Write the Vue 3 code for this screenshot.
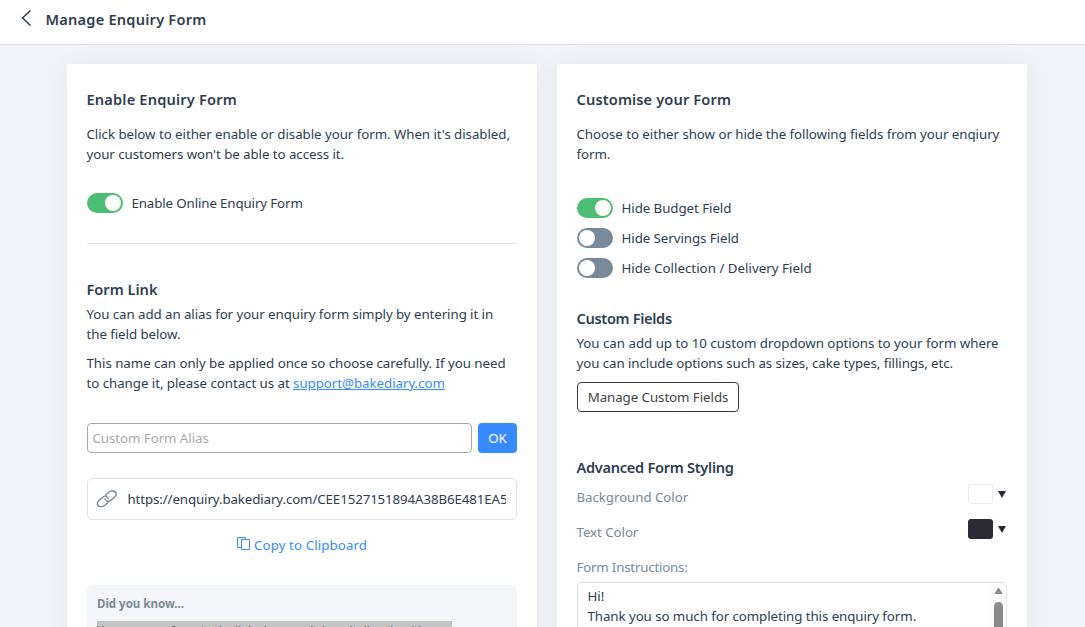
<script setup>
import { ref } from 'vue'

const enabled = ref(true)
const alias = ref('')
const fields = ref([
  { label: 'Hide Budget Field', on: true, cls: 'f1' },
  { label: 'Hide Servings Field', on: false, cls: 'f2' },
  { label: 'Hide Collection / Delivery Field', on: false, cls: 'f3' },
])
const colors = [
  { label: 'Background Color', cls: 'light' },
  { label: 'Text Color', cls: 'dark' },
]
</script>

<template>
  <div class="page">
    <header class="topbar">
      <svg class="back" width="12" height="18" viewBox="0 0 12 18"><path d="M10.5 1.5 L2.5 9 L10.5 16.5" /></svg>
      <h1 class="t-manage">Manage Enquiry Form</h1>
    </header>

    <main class="columns">
      <section class="card">
        <h2><span class="t-enable">Enable Enquiry Form</span></h2>
        <p class="intro">
          <span class="line a1">Click below to either enable or disable your form. When it's disabled,</span>
          <span class="line a2">your customers won't be able to access it.</span>
        </p>
        <div class="toggle-row single">
          <button class="switch" :class="{ on: enabled }" @click="enabled = !enabled"><i></i></button>
          <span class="a3">Enable Online Enquiry Form</span>
        </div>
        <hr />
        <h2 class="link-title"><span class="t-link">Form Link</span></h2>
        <p>
          <span class="line a4">You can add an alias for your enquiry form simply by entering it in</span>
          <span class="line a5">the field below.</span>
        </p>
        <p class="second">
          <span class="line a6">This name can only be applied once so choose carefully. If you need</span>
          <span class="line a7">to change it, please contact us at <a class="mail">support@bakediary.com</a></span>
        </p>
        <div class="alias-row">
          <input v-model="alias" placeholder="Custom Form Alias" />
          <button class="ok">OK</button>
        </div>
        <div class="url-box">
          <svg class="chain" width="22" height="18" viewBox="0 0 22 18">
            <path d="M9.2 5.4 L12.4 2.5 Q14 1 16 1 L17.2 1 Q20 1.3 20.2 4 Q20.2 5.4 19 6.6 L14.5 10.6 Q12.8 12 10.9 11.2 Q9 10.2 8.9 8.2" />
            <path d="M12.2 12.3 L8.8 15.3 Q7.4 16.6 5.3 16.6 L4.2 16.6 Q1.4 16.3 1.3 13.6 Q1.3 12.2 2.5 11.1 L7 7 Q8.7 5.6 10.6 6.5 Q12.3 7.4 12.5 9.3" />
          </svg>
          <div class="url"><span class="t-url">https://enquiry.bakediary.com/CEE1527151894A38B6E481EA5</span></div>
        </div>
        <div class="copy">
          <svg width="14" height="14" viewBox="0 0 14 14"><path d="M4.5 10.5H.5V.5H8.5V2.5M4.5 2.5H12.5V12.5H4.5Z" /></svg>
          <span class="t-copy">Copy to Clipboard</span>
        </div>
        <div class="tip">
          <strong><span class="t-did">Did you know...</span></strong>
          <div><mark>You can copy &amp; paste the link above and share it directly with</mark></div>
        </div>
      </section>

      <section class="card">
        <h2><span class="t-cust">Customise your Form</span></h2>
        <p class="intro">
          <span class="line b1">Choose to either show or hide the following fields from your enqiury</span>
          <span class="line b2">form.</span>
        </p>
        <div class="toggles">
          <div v-for="f in fields" :key="f.label" class="toggle-row">
            <button class="switch" :class="{ on: f.on }" @click="f.on = !f.on"><i></i></button>
            <span :class="f.cls">{{ f.label }}</span>
          </div>
        </div>
        <h2 class="fields-title"><span class="t-fields">Custom Fields</span></h2>
        <p>
          <span class="line b3">You can add up to 10 custom dropdown options to your form where</span>
          <span class="line b4">you can include options such as sizes, cake types, fillings, etc.</span>
        </p>
        <button class="manage"><span class="t-mcf">Manage Custom Fields</span></button>
        <h2 class="styling-title"><span class="t-adv">Advanced Form Styling</span></h2>
        <div v-for="c in colors" :key="c.label" class="color-row">
          <span :class="'l-' + c.cls">{{ c.label }}</span>
          <div class="picker">
            <i class="swatch" :class="c.cls"></i>
            <svg width="8" height="7" viewBox="0 0 8 7"><path d="M0 0H8L4 7Z" fill="#2b2b35" /></svg>
          </div>
        </div>
        <div class="color-row"><span class="l-ins">Form Instructions:</span></div>
        <div class="editor">
          <div class="body">
            <span class="line">Hi!</span>
            <span class="line b5">Thank you so much for completing this enquiry form.</span>
          </div>
          <div class="scroll">
            <svg width="9" height="8" viewBox="0 0 9 8"><path d="M4.5 1 L8 6.5 H1Z" /></svg>
            <i></i>
          </div>
        </div>
      </section>
    </main>
  </div>
</template>

<style>
body { margin: 0; overflow: hidden; }
</style>

<style scoped>
* { box-sizing: border-box; }
.page {
  height: 627px; overflow: hidden; background: #f2f3f8; color: #2e3e50;
  font: 13.3px/20px "Segoe UI", "Noto Sans", "Open Sans", sans-serif;
  letter-spacing: -.06px;
}
button, input { font: inherit; letter-spacing: inherit; }
.topbar {
  height: 45px; background: #fff; border-bottom: 1px solid #e0e0e2;
  display: flex; align-items: flex-start; padding: 9px 0 0 20px;
}
.back { fill: none; stroke: #2e3e50; stroke-width: 1.5; }
h1, h2 { margin: 0; font-size: 14.6px; line-height: 20px; font-weight: 600; white-space: nowrap; letter-spacing: 0; text-indent: -.5px; }
h1 { margin: 0 0 0 14px; }
.t-manage { letter-spacing: .22px; }
.t-enable { letter-spacing: .18px; }
.t-cust { letter-spacing: .13px; }
.t-fields { letter-spacing: -.33px; }
.t-adv { letter-spacing: -.29px; }
.columns { display: flex; gap: 20px; padding: 19px 58px 0 67px; }
.card {
  width: 470px; height: 620px; padding: 25px 20px 0; background: #fff;
  border-radius: 3px; box-shadow: 0 0 24px rgba(82, 63, 105, .06);
}
p { margin: 0; }
.intro { margin-top: 15px; }
.line { display: block; white-space: nowrap; height: 20px; text-indent: -.5px; }
.a1 { letter-spacing: -.05px; }
.a3 { letter-spacing: -.12px; }
.a4 { letter-spacing: -.07px; }
.a6 { letter-spacing: -.04px; }
.a7 { letter-spacing: -.045px; }
.b1 { letter-spacing: -.05px; }
.b3 { letter-spacing: -.02px; }
.b4 { letter-spacing: -.07px; }
.b5 { letter-spacing: -.07px; }
.f3 { letter-spacing: .02px; }
.l-ins { letter-spacing: -.2px; }
.t-copy { letter-spacing: .1px; }
.t-url { letter-spacing: -.11px; }
.toggle-row { display: flex; align-items: center; height: 30px; gap: 8.5px; white-space: nowrap; }
.single { margin-top: 24px; }
.toggles { margin-top: 29px; }
.switch { width: 36px; height: 20px; border: 0; border-radius: 10px; padding: 2px; background: #788a99; display: flex; }
.switch.on { background: #4dbd74; justify-content: flex-end; }
.switch i { width: 16px; height: 16px; border-radius: 50%; background: #fff; }
hr { border: 0; height: 1px; background: #e2e3e5; margin: 25px 0 0; }
.link-title { margin: 35px 0 5px; }
.second { margin-top: 9px; }
.mail { color: #378aff; text-decoration: underline; }
.alias-row { display: flex; gap: 6px; margin-top: 30px; }
.alias-row input { width: 385px; height: 30px; border: 1px solid #a9a9a9; border-radius: 4px; padding: 0 4.5px; outline: 0; background: #fff; }
.alias-row input::placeholder { color: #a9a9a9; opacity: 1; }
.ok { width: 39px; height: 30px; border: 0; border-radius: 4px; background: #378aff; color: #fff; padding: 0; }
.url-box { display: flex; align-items: center; height: 42px; margin-top: 25px; border: 1px solid #e2e3e5; border-radius: 5px; padding: 0 10px 0 8px; }
.chain { fill: none; stroke: #788a99; stroke-width: 1.4; flex: none; }
.url { margin-left: 9.5px; overflow: hidden; white-space: nowrap; flex: 1; }
.copy { display: flex; padding-left: 150px; gap: 3px; margin-top: 15px; color: #378aff; white-space: nowrap; }
.copy svg { margin-top: 2px; fill: none; stroke: #378aff; stroke-width: 1; }
.tip { margin-top: 30px; height: 100px; background: #f4f5f8; border-radius: 5px; padding: 10px; font-size: 11.5px; line-height: 18px; color: #788a99; white-space: nowrap; letter-spacing: 0; }
.tip div { margin-top: 8px; width: 355px; height: 18px; background: #c4c4c4; }
.tip mark { background: none; color: #46484d; }
.fields-title { margin: 25px 0 5px; }
.manage { display: block; width: 162px; height: 30px; margin-top: 9px; border: 1px solid #3a3a3e; border-radius: 4px; background: #fff; color: #444; padding: 0; white-space: nowrap; }
.styling-title { margin: 45px 0 3px; }
.color-row { display: flex; justify-content: space-between; height: 35px; padding-top: 7px; color: #788a99; text-indent: -.5px; }
.picker { display: flex; align-items: center; height: 20px; gap: 5px; margin: -3px 1px 0 0; }
.picker .swatch { width: 25px; height: 20px; border-radius: 3px; }
.swatch.light { background: #fff; border: 1px solid #ebebeb; }
.swatch.dark { background: #2b2a35; }
.editor { display: flex; justify-content: space-between; height: 90px; margin-top: -3px; border: 1px solid #e2e3e5; border-radius: 5px; padding: 3px 0 0 10px; width: 430px; }
.scroll { width: 16px; margin-top: -3px; background: #fcfcfc; display: flex; flex-direction: column; align-items: center; padding-top: 4px; }
.scroll svg { fill: #8b8b8b; stroke: #8b8b8b; stroke-linejoin: round; flex: none; }
.scroll i { width: 9px; height: 80px; margin-top: 7px; border-radius: 5px; background: #8b8b8b; flex: none; }
</style>
